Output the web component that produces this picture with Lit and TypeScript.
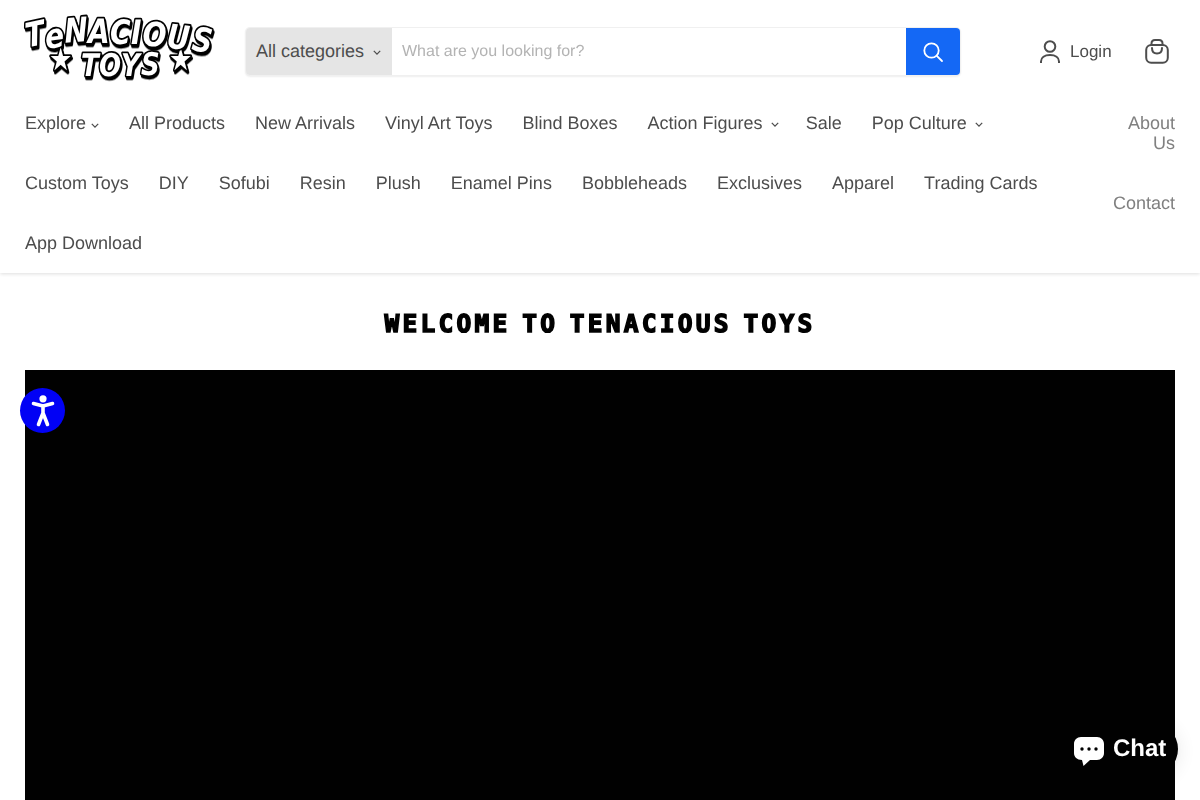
import { LitElement, html, css } from "lit";
import { customElement } from "lit/decorators.js";

const chevron = html`<svg class="chev" viewBox="0 0 10 6" width="8" height="5" aria-hidden="true"><path d="M1 1l4 4 4-4" fill="none" stroke="currentColor" stroke-width="1.6"/></svg>`;

@customElement("app-root")
export class AppRoot extends LitElement {
  static styles = css`
    :host { display: block; font-family: "Liberation Sans", Arial, sans-serif; color: #4d4d4d; height: 800px; overflow: hidden; position: relative; text-rendering: geometricPrecision; will-change: opacity; opacity: .999; }
    header { box-shadow: 0 1px 4px rgba(0,0,0,.14); padding: 0 25px; height: 273px; box-sizing: border-box; position: relative; }
    .top { display: flex; align-items: flex-start; height: 93px; }
    .logo { width: 195px; height: 62px; margin-top: 20px; flex: none; display: block; overflow: visible; }
    .search { margin: 28px 0 0 26px; width: 714px; height: 47px; display: flex; border-radius: 4px; box-shadow: 0 0 0 1px #f0f0f0, 0 1px 3px rgba(0,0,0,.16); overflow: hidden; flex: none; }
    .cat { width: 146px; flex: none; background: #e5e5e5; font-size: 18px; display: flex; align-items: center; padding-left: 10px; box-sizing: border-box; }
    .cat .chev { margin-left: 9px; margin-top: 2px; }
    .ph { flex: 1; font-size: 16px; color: #b3b3b3; display: flex; align-items: center; padding: 1px 0 0 10px; }
    .btn { width: 54px; flex: none; background: #1468f5; display: flex; align-items: center; justify-content: center; }
    .login { display: flex; align-items: center; gap: 10px; margin: 28px 0 0 80px; height: 47px; font-size: 17px; }
    .cart { margin: 39px 0 0 33px; display: block; }
    nav { display: flex; justify-content: space-between; align-items: flex-start; }
    ul { list-style: none; margin: 0; padding: 0; }
    .main { display: flex; flex-wrap: wrap; column-gap: 30px; width: 1040px; font-size: 18px; line-height: 20px; }
    .main li { padding: 20px 0; display: flex; align-items: center; white-space: nowrap; }
    .main .chev { margin: 3px -3px 0 8px; }
    .main li.near .chev { margin: 4px 0 0 5px; }
    .aux { width: 62px; font-size: 18px; line-height: 20px; text-align: right; color: #808080; }
    .aux li { padding: 20px 0; }
    main { padding: 0 25px; }
    h1 { margin: 0; padding-top: 34px; height: 63px; text-align: center; font-family: "DejaVu Sans Mono", monospace; font-weight: 700; font-size: 24.5px; line-height: 34px; color: #000; letter-spacing: 3.25px; word-spacing: -6.3px; -webkit-text-stroke: 1.5px #000; }
    .video { height: 430px; background: #000; }
    .a11y { position: absolute; left: 20px; top: 388px; width: 45px; height: 45px; border-radius: 50%; background: #0000f5; display: flex; align-items: center; justify-content: center; }
    .chat { position: absolute; left: 1059px; top: 722px; width: 119px; height: 54px; border-radius: 27px; background: #000; color: #fff; display: flex; align-items: center; gap: 9px; box-sizing: border-box; padding-left: 15px; font-weight: 700; font-size: 24px; box-shadow: 0 1px 6px rgba(0,0,0,.06), 0 2px 24px rgba(0,0,0,.1); }
    .chat svg { margin-top: 5px; }
    .lg { font-family: "DejaVu Sans", sans-serif; font-weight: 700; font-style: italic; fill: #fff; stroke: #000; stroke-width: 3; paint-order: stroke; stroke-linejoin: round; filter: drop-shadow(1.5px 2.5px 0 #000); }
  `;

  render() {
    return html`
      <header>
        <div class="top">
          <svg class="logo" viewBox="0 0 195 62" aria-label="Tenacious Toys">
            <g class="lg" transform="scale(1 1.2)">
              <text font-size="26" x="24 56 74 96 116 144" y="42 46.500 46.500 46.500 46 42">★TOYS★</text>
              <text font-size="28" x="2 21 40 63 85 106 117 141 166" y="23 24 19 19 20 20 21 23 25" rotate="-10 -6 -4 0 0 0 4 6 8">TeNACIOUS</text>
            </g>
          </svg>
          <div class="search">
            <div class="cat">All categories ${chevron}</div>
            <div class="ph">What are you looking for?</div>
            <div class="btn">
              <svg width="22" height="22" viewBox="0 0 22 22" fill="none" stroke="#fff" stroke-width="1.8"><circle cx="9.500" cy="9.500" r="7.200"/><path d="M14.800 14.800L20 20" stroke-linecap="round"/></svg>
            </div>
          </div>
          <div class="login">
            <svg width="20" height="23" viewBox="0 0 20 23" fill="none" stroke="#4d4d4d" stroke-width="2"><circle cx="10" cy="6.500" r="5.300"/><path d="M1 23v-1.500c0-4 3.500-6.500 9-6.500s9 2.500 9 6.500V23"/></svg>
            <span>Login</span>
          </div>
          <svg class="cart" width="24" height="25" viewBox="0 0 24 25" fill="none" stroke="#4d4d4d" stroke-width="2"><rect x="1.200" y="6" width="21.600" height="17.800" rx="5"/><path d="M6.500 6V4.500C6.500 2.500 8 1 10 1h4c2 0 3.500 1.500 3.500 3.500V6"/><path d="M7 9c0 3.500 2 5.500 5 5.500s5-2 5-5.500" stroke-linecap="round"/></svg>
        </div>
        <nav>
          <ul class="main">
            <li class="near">Explore ${chevron}</li>
            <li>All Products</li>
            <li>New Arrivals</li>
            <li>Vinyl Art Toys</li>
            <li>Blind Boxes</li>
            <li>Action Figures ${chevron}</li>
            <li>Sale</li>
            <li>Pop Culture ${chevron}</li>
            <li>Custom Toys</li>
            <li>DIY</li>
            <li>Sofubi</li>
            <li>Resin</li>
            <li>Plush</li>
            <li>Enamel Pins</li>
            <li>Bobbleheads</li>
            <li>Exclusives</li>
            <li>Apparel</li>
            <li>Trading Cards</li>
            <li>App Download</li>
          </ul>
          <ul class="aux">
            <li>About Us</li>
            <li>Contact</li>
          </ul>
        </nav>
      </header>
      <main>
        <h1>WELCOME TO TENACIOUS TOYS</h1>
        <div class="video"></div>
      </main>
      <div class="a11y">
        <svg width="26" height="32" viewBox="0 0 26 32"><circle cx="13" cy="3.800" r="3.600" fill="#fff"/><path d="M3.500 8.500L13 11l9.500-2.500M13 11v7M13 18L8.500 29.500M13 18l4.500 11.500" fill="none" stroke="#fff" stroke-width="3.600" stroke-linecap="round" stroke-linejoin="round"/></svg>
      </div>
      <div class="chat">
        <svg width="30" height="29" viewBox="0 0 30 29"><path d="M7 0h16c4 0 7 3 7 7v9c0 4-3 7-7 7H16l-6.500 6-1.500-6C3 23 0 20 0 16V7c0-4 3-7 7-7z" fill="#fff"/><circle cx="8" cy="12" r="1.700"/><circle cx="15" cy="12" r="1.700"/><circle cx="22" cy="12" r="1.700"/></svg>
        <span>Chat</span>
      </div>
    `;
  }
}
